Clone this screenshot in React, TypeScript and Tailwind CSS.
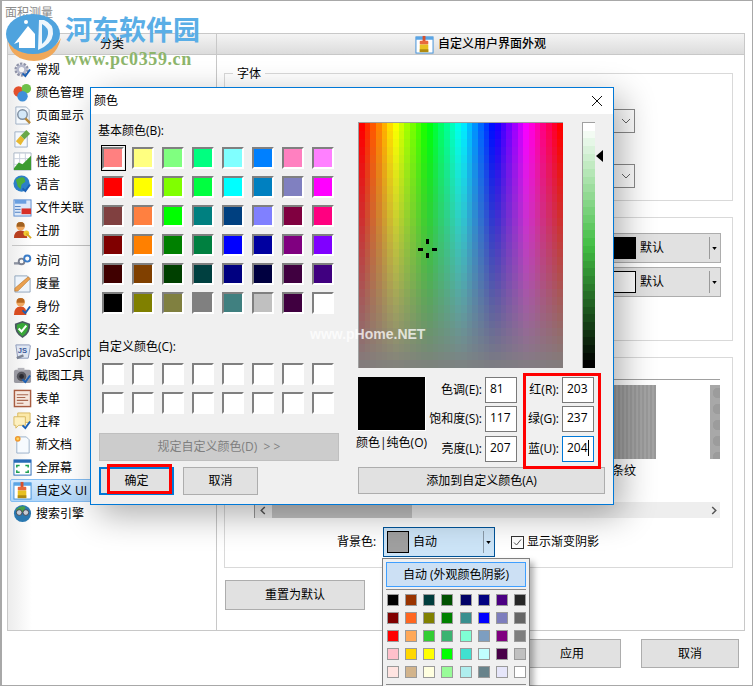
import React from "react";

const FONT = "font-['Open_Sans','Noto_Sans_CJK_SC',sans-serif]";

const BASIC = [
  ["#ff8080", "#ffff80", "#80ff80", "#00ff80", "#80ffff", "#0080ff", "#ff80c0", "#ff80ff"],
  ["#ff0000", "#ffff00", "#80ff00", "#00ff40", "#00ffff", "#0080c0", "#8080c0", "#ff00ff"],
  ["#804040", "#ff8040", "#00ff00", "#008080", "#004080", "#8080ff", "#800040", "#ff0080"],
  ["#800000", "#ff8000", "#008000", "#008040", "#0000ff", "#0000a0", "#800080", "#8000ff"],
  ["#400000", "#804000", "#004000", "#004040", "#000080", "#000040", "#400040", "#400080"],
  ["#000000", "#808000", "#808040", "#808080", "#408080", "#c0c0c0", "#400040", "#ffffff"],
];

const POPUP = [
  ["#000000", "#993300", "#003c3c", "#005000", "#000066", "#000080", "#4b0082", "#262626"],
  ["#800000", "#ff6620", "#808000", "#008000", "#388e8e", "#0000ff", "#7d7dbd", "#666666"],
  ["#ff0000", "#ffa858", "#32cd32", "#3cb371", "#7fffd4", "#7d9ec0", "#800080", "#7f7f7f"],
  ["#ffc0cb", "#ffd700", "#ffff00", "#00ff00", "#40e0d0", "#c0ffff", "#480048", "#c0c0c0"],
  ["#ffe4e1", "#d2b48c", "#ffffe0", "#98fb98", "#afeeee", "#68838b", "#e6e6fa", "#ffffff"],
];

const Check = () => (
  <path d="M10 14l3 3 5-7" fill="none" stroke="#1a5fb4" strokeWidth="2" />
);

const BrushIcon = () => (
  <>
    <rect x="1" y="2" width="18" height="17" fill="#fff" stroke="#3f8fd8" />
    <rect x="1" y="2" width="18" height="3" fill="#5aa5e5" />
    <rect x="8" y="1" width="3" height="6" fill="#d8502c" />
    <rect x="5" y="6" width="9" height="4" rx="1" fill="#e8683c" />
    <rect x="5" y="10" width="9" height="8" fill="#e8c020" />
    <rect x="5" y="15" width="9" height="3" fill="#b08a10" />
  </>
);

const ICONS: Record<string, React.ReactNode> = {
  gear: (
    <>
      <circle cx="9" cy="10" r="6" fill="none" stroke="#8f93a8" strokeWidth="3" strokeDasharray="2.5 1.2" />
      <circle cx="9" cy="10" r="4" fill="none" stroke="#b4b8cc" strokeWidth="2.5" />
      <Check />
    </>
  ),
  color: (
    <>
      <circle cx="6" cy="9" r="5.5" fill="#e2502c" />
      <circle cx="14" cy="6" r="5" fill="#6cc04a" />
      <circle cx="10" cy="14" r="5.5" fill="#3f8fd8" />
    </>
  ),
  page: (
    <>
      <path d="M3 1h11l3 3v15H3z" fill="#f4f8fc" stroke="#9fb0c4" />
      <circle cx="10" cy="9" r="5" fill="#d4e8f8" stroke="#7e8ea0" strokeWidth="1.5" />
      <path d="M13 13l5 5" stroke="#b88838" strokeWidth="2.5" />
    </>
  ),
  render: (
    <>
      <path d="M2 3h13v16H2z" fill="#f4f8fc" stroke="#9fb0c4" />
      <path d="M14 1l4 4-6 6-4-4z" fill="#6aa84a" />
      <path d="M8 7l4 4-4 6-5-4z" fill="#e8b830" />
    </>
  ),
  perf: (
    <>
      <path d="M1 1h18v18H1z" fill="#fff" stroke="#a8b4c4" />
      <path d="M1 7h18M1 13h18M7 1v18M13 1v18" stroke="#c8d0dc" />
      <path d="M1 17l5-6 4 2 9-9v15H1z" fill="#3c9c30" />
    </>
  ),
  globe: (
    <>
      <circle cx="9" cy="9" r="8.5" fill="#2d7fc8" />
      <path d="M3 5q5-4 9-2l1 4-4 3-1 5-3-3z" fill="#4cae3c" />
      <Check />
    </>
  ),
  file: (
    <>
      <rect x="1" y="2" width="18" height="17" fill="#dce8f8" stroke="#5a8cd0" />
      <rect x="2" y="2" width="12" height="4" fill="#6aa0e0" />
      <rect x="9" y="11" width="10" height="6" fill="#d83028" />
      <path d="M2 9h6M2 12h6M2 15h6" stroke="#4a7cc0" />
    </>
  ),
  user: (
    <>
      <circle cx="8" cy="5.5" r="4.5" fill="#f0a860" />
      <path d="M8 1q5 0 4 5l-8 0q-1-5 4-5z" fill="#a06020" />
      <path d="M1 18q0-8 7-8t7 8z" fill="#b84020" />
      <circle cx="14" cy="13" r="3" fill="#f0c830" />
      <path d="M14 13l5 5" stroke="#d8a820" strokeWidth="2" />
    </>
  ),
  link: (
    <>
      <path d="M1 13h6" stroke="#8c92a0" strokeWidth="2.5" />
      <circle cx="9" cy="11" r="3" fill="none" stroke="#7a8090" strokeWidth="2" />
      <circle cx="15" cy="8" r="3.2" fill="none" stroke="#3a7cc8" strokeWidth="2" />
    </>
  ),
  ruler: (
    <>
      <path d="M2 2h13l3 3v14H2z" fill="#eef4fb" stroke="#8fa4bc" />
      <path d="M16 3l2 2L5 18l-3 0 0-3z" fill="#eaa050" stroke="#b87830" strokeWidth=".7" />
    </>
  ),
  person: (
    <>
      <circle cx="8" cy="5.5" r="4.5" fill="#f0a860" />
      <path d="M8 1q5 0 4 5l-8 0q-1-5 4-5z" fill="#b86820" />
      <path d="M1 19q0-9 7-9t6 9z" fill="#d84c20" />
      <Check />
    </>
  ),
  shield: (
    <>
      <path d="M10 1l8 3q1 10-8 15Q1 14 2 4z" fill="#4a5a60" />
      <path d="M10 3l6 2q.5 8-6 12-6.500-4-6-12z" fill="#38a838" />
      <path d="M6 9l3 3 5-6" fill="none" stroke="#fff" strokeWidth="2.200" />
    </>
  ),
  script: (
    <>
      <path d="M3 2h14q2 0 1 3l-2 11H5z" fill="#dfe6f2" stroke="#8a98b8" />
      <text x="5" y="10" fontSize="8" fontWeight="700" fontFamily="Liberation Sans" fill="#3a5a9c">JS</text>
      <path d="M4 16l7-3" stroke="#7d8494" strokeWidth="2.500" />
    </>
  ),
  camera: (
    <>
      <rect x="1" y="4" width="18" height="14" rx="2" fill="#9a9aa2" />
      <rect x="5" y="2" width="7" height="3" fill="#b4b4ba" />
      <circle cx="9" cy="11" r="5" fill="#55555c" />
      <circle cx="9" cy="11" r="2.500" fill="#2a2a30" />
      <Check />
    </>
  ),
  form: (
    <>
      <rect x="1.500" y="1.500" width="17" height="17" fill="#f5e6dc" stroke="#a85c40" strokeWidth="1.500" />
      <path d="M4 6h12M4 9h9M4 12h12M4 15h7" stroke="#a86850" strokeWidth="1.200" />
    </>
  ),
  note: (
    <>
      <path d="M5 1h13v10H9l-3 3v-3H5z" fill="#fbe8a8" stroke="#d8b860" />
      <path d="M1 5h12v9H6l-3 3v-3H1z" fill="#fdf0c0" stroke="#d8b860" />
      <Check />
    </>
  ),
  doc: (
    <>
      <path d="M4 2h10l3 3v14H4z" fill="#f6fafe" stroke="#9ab0c8" />
      <circle cx="5" cy="4" r="3" fill="#f09830" />
      <circle cx="5" cy="4" r="1.400" fill="#fbd860" />
    </>
  ),
  full: (
    <>
      <rect x="1" y="2" width="18" height="16" fill="#fff" stroke="#2a6cb8" />
      <rect x="1" y="2" width="18" height="3" fill="#2a6cb8" />
      <path d="M4 10V8h3M13 8h3v2M4 13v2h3M13 15h3v-2" fill="none" stroke="#20a050" strokeWidth="1.600" />
    </>
  ),
  brush: <BrushIcon />,
  search: (
    <>
      <circle cx="10" cy="10" r="9" fill="#2a78b0" />
      <path d="M3 6q5-5 10-3l-1 5-6 2z" fill="#48a048" />
      <circle cx="6.500" cy="9" r="3" fill="#c8ccd4" stroke="#404450" />
      <circle cx="13.500" cy="9" r="3" fill="#c8ccd4" stroke="#404450" />
    </>
  ),
};

const SIDE_TOP = [
  ["gear", "常规"],
  ["color", "颜色管理"],
  ["page", "页面显示"],
  ["render", "渲染"],
  ["perf", "性能"],
  ["globe", "语言"],
  ["file", "文件关联"],
  ["user", "注册"],
];

const SIDE_BOTTOM = [
  ["link", "访问"],
  ["ruler", "度量"],
  ["person", "身份"],
  ["shield", "安全"],
  ["script", "JavaScript"],
  ["camera", "截图工具"],
  ["form", "表单"],
  ["note", "注释"],
  ["doc", "新文档"],
  ["full", "全屏幕"],
  ["brush", "自定义 UI"],
  ["search", "搜索引擎"],
];

const Icon = ({ name, className = "" }: { name: string; className?: string }) => (
  <svg viewBox="0 0 20 20" className={`h-[19px] w-[19px] shrink-0 ${className}`}>
    {ICONS[name]}
  </svg>
);

const SideItem = ({ icon, label }: { icon: string; label: string }) => {
  const selected = label === "自定义 UI";
  return (
    <div
      className={`flex h-[23px] items-center gap-1 whitespace-nowrap ${
        selected
          ? "ml-[2px] mr-2 rounded-[2px] border border-[#84bdf2] bg-[linear-gradient(to_bottom,#d6eafd,#aed5f9)] pl-[2px]"
          : "ml-[3px] pl-[2px]"
      }`}
    >
      <Icon name={icon} />
      <span>{label}</span>
    </div>
  );
};

const ArrowDown = () => (
  <svg viewBox="0 0 6 4" className="h-[3px] w-[5px] shrink-0">
    <path d="M0 0h6L3 4z" fill="#000" />
  </svg>
);

const Chevron = () => (
  <svg viewBox="0 0 10 6" className="h-[6px] w-[10px]">
    <path d="M1 1l4 4 4-4" fill="none" stroke="#666" />
  </svg>
);

const FontSelect = () => (
  <div className="flex h-6 w-[120px] items-center justify-end border border-[#8a8a8a] bg-white pr-[3px]">
    <Chevron />
  </div>
);

const ColorCombo = ({ swatch }: { swatch: string }) => (
  <div className="flex h-[30px] w-[141px] items-center border border-[#adadad] bg-[#e1e1e1] pl-[3px]">
    <div className={`h-[22px] w-[52px] shrink-0 border border-black ${swatch}`} />
    <span className="ml-1 grow">默认</span>
    <div className="mr-[2px] h-[22px] w-px bg-[#9a9a9a]" />
    <div className="mr-[3px]">
      <ArrowDown />
    </div>
  </div>
);

const Button = ({ label, className = "" }: { label: string; className?: string }) => (
  <div className={`flex items-center justify-center border border-[#adadad] bg-[#e1e1e1] ${className}`}>{label}</div>
);

const Well = ({ color }: { color: string }) => (
  <div
    className="h-[22px] w-[22px] border-2 border-b-white border-l-[#808080] border-r-white border-t-[#808080]"
    style={{ backgroundColor: color }}
  />
);

const Spectrum = () => {
  const cols = 36;
  const rows = 31;
  const cells = [];
  for (let y = 0; y < rows; y++) {
    for (let x = 0; x < cols; x++) {
      cells.push(
        <rect
          key={`${x}-${y}`}
          x={x}
          y={y}
          width="1.05"
          height="1.05"
          fill={`hsl(${(x / (cols - 1)) * 360}, ${100 - (y / (rows - 1)) * 97}%, 50%)`}
        />
      );
    }
  }
  return (
    <svg viewBox={`0 0 ${cols} ${rows}`} preserveAspectRatio="none" shapeRendering="crispEdges" className="h-full w-full">
      {cells}
    </svg>
  );
};

const LumBar = () => {
  const rows = 32;
  return (
    <svg viewBox={`0 0 1 ${rows}`} preserveAspectRatio="none" shapeRendering="crispEdges" className="h-full w-full">
      {Array.from({ length: rows }).map((_, i) => (
        <rect key={i} x="0" y={i} width="1" height="1.05" fill={`hsl(121, 49%, ${100 - (i / (rows - 1)) * 100}%)`} />
      ))}
    </svg>
  );
};

const Field = ({ label, value, focused, className = "" }: { label: string; value: string; focused?: boolean; className?: string }) => (
  <div className={`flex items-center justify-end gap-[3px] whitespace-nowrap ${className}`}>
    <span>{label}</span>
    <div
      className={`flex h-[26px] w-[32px] items-center border bg-white pb-[2px] pl-1 ${
        focused ? "border-[#0078d7]" : "border-[#7a7a7a]"
      }`}
    >
      {value}
      {focused && <span className="h-[16px] w-px bg-black" />}
    </div>
  </div>
);

const ColorDialog = () => (
  <div className="absolute left-[90px] top-[87px] h-[418px] w-[524px] border border-[#0078d7] bg-[#f0f0f0] shadow-[8px_10px_32px_rgba(0,0,0,0.32)]">
    <div className="flex h-[26px] items-center justify-between bg-white pl-[3px] pr-[10px]">
      <span>颜色</span>
      <svg viewBox="0 0 12 12" className="h-3 w-3">
        <path d="M1 1l10 10M11 1L1 11" stroke="#111" strokeWidth="1" />
      </svg>
    </div>
    <div className="flex">
      <div className="flex w-[267px] shrink-0 flex-col pl-[7px]">
        <div className="mt-2 h-[18px] leading-[18px]">基本颜色(B):</div>
        <div className="relative ml-1 mt-[7px] grid w-[232px] grid-cols-8 gap-x-2 gap-y-[7px]">
          {BASIC.flat().map((color, i) => (
            <Well key={i} color={color} />
          ))}
          <div className="absolute -left-px -top-[2px] h-[26px] w-[25px] border border-black" />
        </div>
        <div className="mt-6 h-[18px] leading-[18px]">自定义颜色(C):</div>
        <div className="ml-1 mt-[7px] grid w-[232px] grid-cols-8 gap-x-2 gap-y-[7px]">
          {Array.from({ length: 16 }).map((_, i) => (
            <Well key={i} color="#ffffff" />
          ))}
        </div>
        <div className="ml-px mt-[19px] flex h-[28px] w-[240px] items-center justify-center whitespace-pre border border-[#bfbfbf] bg-[#cccccc] text-[#7f7f7f]">
          {"规定自定义颜色(D)  > >"}
        </div>
        <div className="ml-px mt-[6px] flex gap-[9px]">
          <div className="flex h-[28px] w-[75px] items-center justify-center border-2 border-[#0078d7] bg-[#e1e1e1]">确定</div>
          <Button label="取消" className="h-[28px] w-[75px]" />
        </div>
      </div>
      <div className="flex flex-col pt-2">
        <div className="flex h-[246px]">
          <div className="relative w-[205px] border-l border-t border-[#a0a0a0]">
            <Spectrum />
            <div className="absolute left-[67px] top-[116px] h-[5px] w-[3px] bg-black" />
            <div className="absolute left-[67px] top-[130px] h-[5px] w-[3px] bg-black" />
            <div className="absolute left-[59px] top-[125px] h-[2.5px] w-[5px] bg-black" />
            <div className="absolute left-[73px] top-[125px] h-[2.5px] w-[5px] bg-black" />
          </div>
          <div className="ml-[19px] w-[13px] border-l border-t border-[#a0a0a0]">
            <LumBar />
          </div>
          <svg viewBox="0 0 7 12" className="ml-px mt-[28px] h-3 w-[7px]">
            <path d="M7 0v12L0 6z" fill="#000" />
          </svg>
        </div>
        <div className="mt-[9px] flex">
          <div className="w-[68px]">
            <div className="h-[54px] w-[68px] border-b border-r border-white bg-black" />
            <div className="-ml-[2px] mt-[3px] h-[18px] whitespace-nowrap leading-[18px]">颜色|纯色(O)</div>
          </div>
          <div className="flex w-[91px] flex-col gap-[3px]">
            <Field label="色调(E):" value="81" />
            <Field label="饱和度(S):" value="117" />
            <Field label="亮度(L):" value="207" className="mt-px" />
          </div>
          <div className="flex w-[77px] flex-col gap-[3px]">
            <Field label="红(R):" value="203" />
            <Field label="绿(G):" value="237" />
            <Field label="蓝(U):" value="204" focused className="mt-px" />
          </div>
        </div>
        <Button label="添加到自定义颜色(A)" className="mt-[5px] h-[27px] w-[247px]" />
      </div>
    </div>
    <div className="absolute left-[432px] top-[285px] h-[96px] w-[78px] border-[3px] border-[#ff0000]" />
    <div className="absolute left-[16px] top-[376px] h-[30px] w-[65px] border-[3px] border-[#ff0000]" />
    <div className="absolute left-[219px] top-[236px] whitespace-nowrap font-['Liberation_Sans',sans-serif] text-[14px] font-bold text-white/75">
      www.pHome.NET
    </div>
  </div>
);

const Popup = () => (
  <div className="absolute left-[382px] top-[558px] h-[140px] w-[148px] border border-[#7f7f7f] bg-[#f0f0f0] px-[3px] pt-[3px] shadow-[4px_4px_6px_rgba(0,0,0,0.3)]">
    <div className="flex h-[25px] items-center justify-center border border-[#3f9fff] bg-[#cce0f4]">自动 (外观颜色阴影)</div>
    <div className="mt-[2px] h-px bg-[#8a8a8a]" />
    <div className="mt-1 grid grid-cols-8 gap-[6px] pl-[1px]">
      {POPUP.flat().map((color, i) => (
        <div key={i} className="h-3 w-3 border border-[#9a9a9a]" style={{ backgroundColor: color }} />
      ))}
    </div>
    <div className="mt-[6px] h-px bg-[#8a8a8a]" />
  </div>
);

const Watermark = () => (
  <div className="absolute left-[5px] top-[14px] flex">
    <svg viewBox="0 0 58 48" className="h-[48px] w-[58px]">
      <path d="M3 26q2 20 26 21 22-1 27-23-8 14-27 15T3 26z" fill="#f0a85a" />
      <ellipse cx="28" cy="20" rx="27" ry="20" fill="#4fa3de" />
      <path d="M9 30L23 12l7 8v14H14v-6z" fill="#fff" />
      <path d="M34 6h5q10 4 9 14t-15 16z" fill="#fff" opacity=".9" />
      <path d="M37 10q7 4 6 10t-6 10z" fill="#4fa3de" />
      <circle cx="21" cy="8" r="2" fill="#fff" />
    </svg>
    <div className="ml-[2px] flex flex-col">
      <div className="h-[30px] whitespace-nowrap font-['Noto_Sans_CJK_SC',sans-serif] text-[27px] font-bold leading-[30px] text-[#5aaee6]">
        河东软件园
      </div>
      <div className="mt-[5px] whitespace-nowrap font-['Liberation_Serif',serif] text-[18px] font-bold leading-[20px] tracking-[0.6px] text-[#8db56b]">
        www.pc0359.cn
      </div>
    </div>
  </div>
);

const Group = ({ label, className = "", children }: { label?: string; className?: string; children?: React.ReactNode }) => (
  <div className={`relative ml-[7px] mr-[11px] border border-[#d9d9d9] ${className}`}>
    {label && <span className="absolute -top-[9px] left-2 bg-white px-1 leading-[18px]">{label}</span>}
    {children}
  </div>
);

export default function App() {
  return (
    <div className={`relative h-[686px] w-[753px] overflow-hidden bg-white text-[12px] text-black ${FONT}`}>
      <div className="flex h-full flex-col border-b border-l-2 border-r border-t border-[#a8a8a8]">
        <div className="h-[32px] pl-[3px] pt-[3px] text-[#8c8c8c]">面积测量</div>
        <div className="ml-[5px] flex h-[598px] w-[738px] border border-[#c8c8c8]">
          <div className="w-[209px] shrink-0 border-r border-[#c8c8c8]">
            <div className="flex h-[21px] items-center justify-center border-b border-[#c8c8c8] bg-[linear-gradient(to_bottom,#f4f4f4,#dcdcdc)]">
              分类
            </div>
            <div className="h-[575px] bg-[linear-gradient(to_right,#ececec,#ffffff)] bg-[length:24px_100%] bg-no-repeat pt-[3px]">
              {SIDE_TOP.map(([icon, label]) => (
                <SideItem key={label} icon={icon} label={label} />
              ))}
              <div className="mx-1 my-[3px] h-px bg-[#c4c4c4]" />
              {SIDE_BOTTOM.map(([icon, label]) => (
                <SideItem key={label} icon={icon} label={label} />
              ))}
            </div>
          </div>
          <div className="flex w-[527px] shrink-0 flex-col">
            <div className="flex h-[21px] items-center justify-center gap-1 border-b border-[#c8c8c8] bg-[linear-gradient(to_bottom,#f4f4f4,#dcdcdc)] font-medium">
              <Icon name="brush" />
              自定义用户界面外观
            </div>
            <Group label="字体" className="mt-[18px] h-[128px]">
              <div className="flex flex-col items-end gap-[31px] pr-[97px] pt-[35px]">
                <FontSelect />
                <FontSelect />
              </div>
            </Group>
            <Group className="mt-[16px] h-[124px]">
              <div className="flex flex-col items-end gap-1 pr-[11px] pt-[15px]">
                <ColorCombo swatch="bg-black" />
                <ColorCombo swatch="bg-white" />
              </div>
            </Group>
            <Group className="mt-[16px] h-[211px]">
              <div className="pl-[29px] pr-[12px] pt-[21px]">
                <div className="h-px bg-[#a0a0a0]" />
                <div className="mt-[5px] flex h-[95px] gap-[54px] overflow-hidden pl-[338px]">
                  <div className="w-[64px] shrink-0">
                    <div className="h-[74px] bg-[repeating-linear-gradient(to_right,#a4a4a4_0,#a4a4a4_2px,#999999_2px,#999999_4px)]" />
                    <div className="mt-[3px] text-center leading-[18px]">条纹</div>
                  </div>
                  <div className="h-[74px] w-[64px] shrink-0 bg-[#a8a8a8] bg-[radial-gradient(circle,#9c9c9c_45%,#a8a8a8_47%)] bg-[length:16px_16px]" />
                </div>
                <div className="mt-[22px] flex h-4 items-center justify-between border-l border-[#999999] bg-[#eeeeee] pr-[3px]">
                  <div className="flex h-full items-center">
                    <svg viewBox="0 0 6 10" className="ml-[5px] h-[9px] w-[6px]">
                      <path d="M5 1L1 5l4 4" fill="none" stroke="#555" strokeWidth="1.600" />
                    </svg>
                    <div className="ml-[6px] h-full w-[140px] bg-[#c4c4c4]" />
                  </div>
                  <svg viewBox="0 0 6 10" className="h-[9px] w-[6px]">
                    <path d="M1 1l4 4-4 4" fill="none" stroke="#555" strokeWidth="1.600" />
                  </svg>
                </div>
                <div className="ml-[83px] mt-[9px] flex items-center">
                  <span className="w-[46px]">背景色:</span>
                  <div className="flex h-[30px] w-[112px] items-center border border-[#005499] bg-[#cce4f7] pl-[3px]">
                    <div className="h-[22px] w-[22px] border border-black bg-[#a0a0a0]" />
                    <span className="ml-1 grow">自动</span>
                    <div className="mr-[2px] h-[22px] w-px bg-[#8a9aa8]" />
                    <div className="mr-[3px]">
                      <ArrowDown />
                    </div>
                  </div>
                  <div className="ml-4 flex h-[13px] w-[13px] items-center justify-center border border-[#333333] bg-white">
                    <svg viewBox="0 0 11 11" className="h-[11px] w-[11px]">
                      <path d="M2 5.500l2.500 2.500L9 2.500" fill="none" stroke="#555" />
                    </svg>
                  </div>
                  <span className="ml-[3px] whitespace-nowrap">显示渐变阴影</span>
                </div>
              </div>
            </Group>
            <Button label="重置为默认" className="ml-2 mt-3 h-[30px] w-[140px]" />
          </div>
        </div>
        <div className="mt-2 flex justify-end gap-5 pr-[13px]">
          <Button label="应用" className="h-[29px] w-[98px]" />
          <Button label="取消" className="h-[29px] w-[98px]" />
        </div>
      </div>
      <Watermark />
      <ColorDialog />
      <Popup />
    </div>
  );
}
